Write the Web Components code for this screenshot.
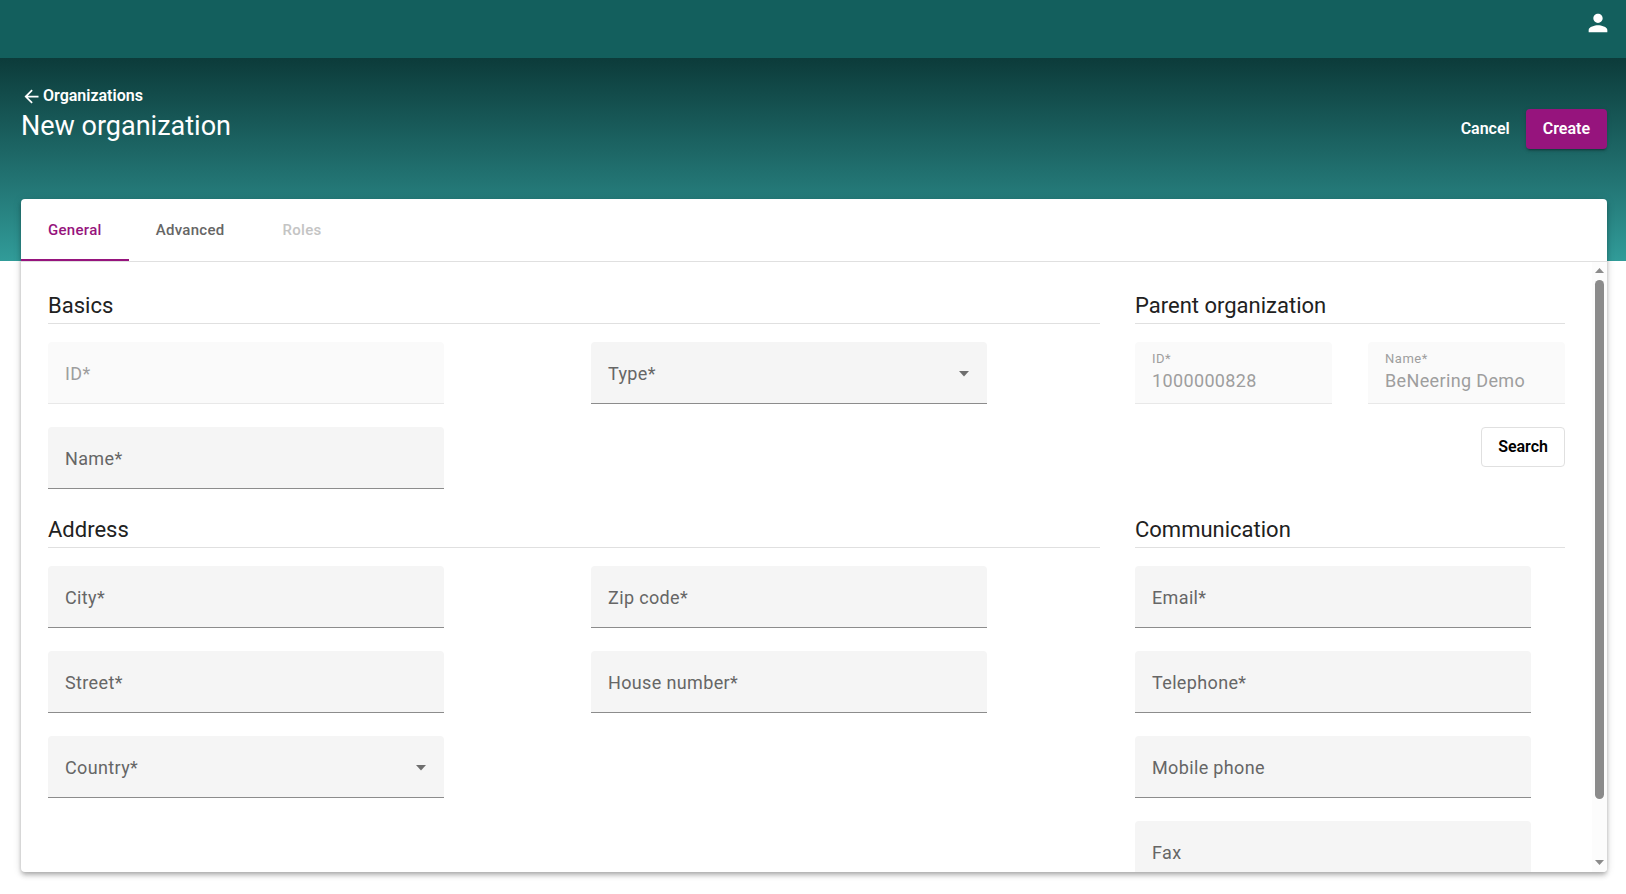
<!DOCTYPE html>
<html lang="en">
<head>
<meta charset="utf-8">
<meta name="viewport" content="width=device-width, initial-scale=1">
<title>New organization</title>
<style>
  html, body { margin: 0; height: 100%; }
  body {
    font-family: Roboto, "Noto Sans", sans-serif;
    font-size: 18px;
    color: #212121;
    background: #fff;
    --accent: #96147d;
    --bar: #135f5d;
    --line: #e0e0e0;
  }
</style>
</head>
<body>
<org-page></org-page>

<script>
const define = (name, html, setup) => {
  const template = document.createElement('template');
  template.innerHTML = html;
  customElements.define(name, class extends HTMLElement {
    constructor() {
      super();
      this.attachShadow({ mode: 'open' }).append(template.content.cloneNode(true));
    }
    connectedCallback() {
      if (setup && !this.ready) { this.ready = true; setup(this, this.shadowRoot); }
    }
  });
};

/* Top application bar with the account button */
define('app-bar', `
  <style>
    :host { display: flex; justify-content: flex-end; align-items: flex-start; box-sizing: border-box;
      height: 58px; padding: 9px 14px; background: var(--bar); flex: none; }
    button { display: block; border: 0; padding: 0; background: none; color: #fff; cursor: pointer; }
    svg { display: block; width: 28px; height: 28px; fill: currentColor; }
  </style>
  <button type="button" aria-label="Account">
    <svg viewBox="0 0 24 24"><path d="M12 12c2.21 0 4-1.79 4-4s-1.79-4-4-4-4 1.790-4 4 1.790 4 4 4zm0 2c-2.670 0-8 1.340-8 4v2h16v-2c0-2.660-5.330-4-8-4z"/></svg>
  </button>`);

/* Button: variant = text | filled | outlined */
define('ui-button', `
  <style>
    :host { display: block; }
    button { box-sizing: border-box; height: 40px; padding: 0 17px; border: 0; border-radius: 4px;
      background: none; color: #fff; font: 600 16px/20px Roboto, sans-serif; cursor: pointer; }
    :host([variant=filled]) button { background: var(--accent);
      box-shadow: 0 3px 1px -2px rgba(0,0,0,.2), 0 2px 2px rgba(0,0,0,.14), 0 1px 5px rgba(0,0,0,.12); }
    :host([variant=text]) button { padding: 0 16px; }
    :host([variant=outlined]) button { border: 1px solid var(--line); background: #fff; color: #000; padding: 0 16px; }
  </style>
  <button type="button"><slot></slot></button>`);

/* Gradient area with back link, title and actions */
define('page-hero', `
  <style>
    :host { display: flex; justify-content: space-between; align-items: flex-start; box-sizing: border-box;
      height: 203px; padding: 27px 19px 0 21px; flex: none; color: #fff;
      background: linear-gradient(#0c3b3a, #257b7a 68%, #319c99); }
    a { display: flex; align-items: center; gap: 1px; color: inherit; text-decoration: none;
      font-size: 16px; font-weight: 600; line-height: 22px; }
    svg { width: 21px; height: 21px; fill: currentColor; }
    h1 { margin: 0; font-size: 27px; font-weight: 400; line-height: 38px; }
    .actions { display: flex; padding-top: 24px; }
  </style>
  <div>
    <a href="#organizations">
      <svg viewBox="0 0 24 24"><path d="M20 11H7.830l5.590-5.590L12 4l-8 8 8 8 1.410-1.410L7.830 13H20v-2z"/></svg>
      <slot name="back"></slot>
    </a>
    <h1><slot></slot></h1>
  </div>
  <div class="actions"><slot name="actions"></slot></div>`);

/* Tab strip */
define('tab-strip', `
  <style>
    :host { display: flex; flex: none; height: 62px; border-bottom: 1px solid var(--line); }
  </style>
  <slot></slot>`);

define('ui-tab', `
  <style>
    :host { display: flex; }
    button { min-width: 101px; border: 0; border-bottom: 2px solid transparent; padding: 2px 27px 0; background: none;
      color: #666; font: 500 15px/20px Roboto, sans-serif; letter-spacing: .02em; cursor: pointer; }
    :host([selected]) button { color: var(--accent); border-bottom-color: var(--accent); }
    button:disabled { color: #c4c4c4; cursor: default; }
  </style>
  <button type="button" role="tab"><slot></slot></button>`, (host, root) => {
  const b = root.querySelector('button');
  b.disabled = host.hasAttribute('disabled');
  b.setAttribute('aria-selected', host.hasAttribute('selected'));
});

/* Filled text field or drop-down with a floating label */
define('form-field', `
  <style>
    :host { display: block; width: 100%; max-width: 396px; }
    .box { display: grid; grid-template: 61px / 1fr; border-bottom: 1px solid #8c8c8c;
      border-radius: 4px 4px 0 0; background: #f5f5f5; color: #666; letter-spacing: .02em; }
    .box > * { grid-area: 1 / 1; min-width: 0; }
    label { padding: 0 17px; line-height: 64px; pointer-events: none; z-index: 1; }
    input, select { box-sizing: border-box; width: 100%; border: 0; margin: 0; padding: 16px 17px 0; background: none;
      appearance: none; outline: 0; color: inherit; font: inherit; line-height: 24px; letter-spacing: inherit; }
    .box.off { background: #fafafa; border-bottom-color: #e8e8e8; color: #9e9e9e; }
    .box.full label { font-size: 13px; line-height: 33px; letter-spacing: .04em; }
    svg { justify-self: end; align-self: center; width: 12px; height: 6px; margin: 2px 17px 0 0;
      fill: #6e6e6e; pointer-events: none; }
  </style>
  <div class="box"><label for="control"></label></div>`, (host, root) => {
  const box = root.querySelector('.box');
  const pick = host.hasAttribute('select');
  const control = document.createElement(pick ? 'select' : 'input');
  control.id = 'control';
  control.disabled = host.hasAttribute('disabled');
  root.querySelector('label').textContent = host.getAttribute('label');
  if (!pick) { control.type = 'text'; control.value = host.getAttribute('value') || ''; }
  const update = () => box.classList.toggle('full', !!control.value);
  control.addEventListener('input', update);
  box.classList.toggle('off', control.disabled);
  box.append(control);
  if (pick) box.insertAdjacentHTML('beforeend', '<svg viewBox="0 0 12 6"><path d="M1 0h10L6 5.500z"/></svg>');
  update();
});

/* Titled group of fields; columns = single | double | pair */
define('form-section', `
  <style>
    :host { display: block; min-width: 0; }
    h2 { margin: 0 0 18px; padding-bottom: 1px; border-bottom: 1px solid var(--line);
      font-size: 22px; font-weight: 400; line-height: 32px; }
    .fields { display: grid; gap: 23px 36px; grid-template-columns: 1fr; }
    :host([columns=double]) .fields { grid-template-columns: 543fr 509fr; column-gap: 0; }
    :host([columns=pair]) .fields { grid-template-columns: 1fr 1fr; }
    ::slotted(ui-button) { grid-column: 1 / -1; justify-self: end; }
  </style>
  <h2></h2>
  <div class="fields"><slot></slot></div>`, (host, root) => {
  root.querySelector('h2').textContent = host.getAttribute('heading');
});

/* Scrolling region with its own always-visible scroll bar */
define('scroll-area', `
  <style>
    :host { display: flex; flex: 1; min-height: 0; }
    .view { flex: 1; min-width: 0; overflow-y: auto; scrollbar-width: none; }
    .bar { display: flex; flex-direction: column; align-items: center; flex: none; box-sizing: border-box;
      width: 15px; padding: 6px 3px 7px; background: #fcfcfc; border-radius: 0 0 4px 0; }
    svg { display: block; width: 9px; height: 5px; fill: #8b8b8b; flex: none; }
    .track { flex: 1; display: flex; flex-direction: column; align-self: stretch; margin: 7px 0; min-height: 0; }
    .before { flex: 0 0 0; }
    .thumb { flex: none; height: 90%; border-radius: 5px; background: #8b8b8b; }
  </style>
  <div class="view"><slot></slot></div>
  <div class="bar" aria-hidden="true">
    <svg viewBox="0 0 9 5"><path d="M0 5h9L4.500 0z"/></svg>
    <div class="track"><div class="before"></div><div class="thumb"></div></div>
    <svg viewBox="0 0 9 5"><path d="M0 0h9L4.500 5z"/></svg>
  </div>`, (host, root) => {
  const view = root.querySelector('.view');
  const sync = () => {
    root.querySelector('.thumb').style.height = view.clientHeight / view.scrollHeight * 100 + '%';
    root.querySelector('.before').style.flexBasis = view.scrollTop / view.scrollHeight * 100 + '%';
  };
  view.addEventListener('scroll', sync);
  new ResizeObserver(sync).observe(view);
});

define('org-form', `
  <style>
    :host { display: grid; grid-template-columns: 1052fr 430fr; gap: 25px 35px; padding: 28px 27px 53px; }
  </style>
  <form-section heading="Basics" columns="double">
    <form-field label="ID*" disabled></form-field>
    <form-field label="Type*" select></form-field>
    <form-field label="Name*"></form-field>
  </form-section>
  <form-section heading="Parent organization" columns="pair">
    <form-field label="ID*" value="1000000828" disabled></form-field>
    <form-field label="Name*" value="BeNeering Demo" disabled></form-field>
    <ui-button variant="outlined">Search</ui-button>
  </form-section>
  <form-section heading="Address" columns="double">
    <form-field label="City*"></form-field>
    <form-field label="Zip code*"></form-field>
    <form-field label="Street*"></form-field>
    <form-field label="House number*"></form-field>
    <form-field label="Country*" select></form-field>
  </form-section>
  <form-section heading="Communication">
    <form-field label="Email*"></form-field>
    <form-field label="Telephone*"></form-field>
    <form-field label="Mobile phone"></form-field>
    <form-field label="Fax"></form-field>
  </form-section>`);

define('org-page', `
  <style>
    :host { display: flex; flex-direction: column; height: 100vh; min-height: 480px; }
    main { display: flex; flex-direction: column; flex: 1; min-height: 0; margin: -62px 19px 22px 21px;
      border-radius: 4px; background: #fff;
      box-shadow: 0 2px 4px -1px rgba(0,0,0,.2), 0 4px 5px rgba(0,0,0,.14), 0 1px 10px rgba(0,0,0,.12); }
  </style>
  <app-bar></app-bar>
  <page-hero>
    <span slot="back">Organizations</span>
    New organization
    <ui-button slot="actions" variant="text">Cancel</ui-button>
    <ui-button slot="actions" variant="filled">Create</ui-button>
  </page-hero>
  <main>
    <tab-strip role="tablist">
      <ui-tab selected>General</ui-tab>
      <ui-tab>Advanced</ui-tab>
      <ui-tab disabled>Roles</ui-tab>
    </tab-strip>
    <scroll-area><org-form></org-form></scroll-area>
  </main>`);
</script>
</body>
</html>
